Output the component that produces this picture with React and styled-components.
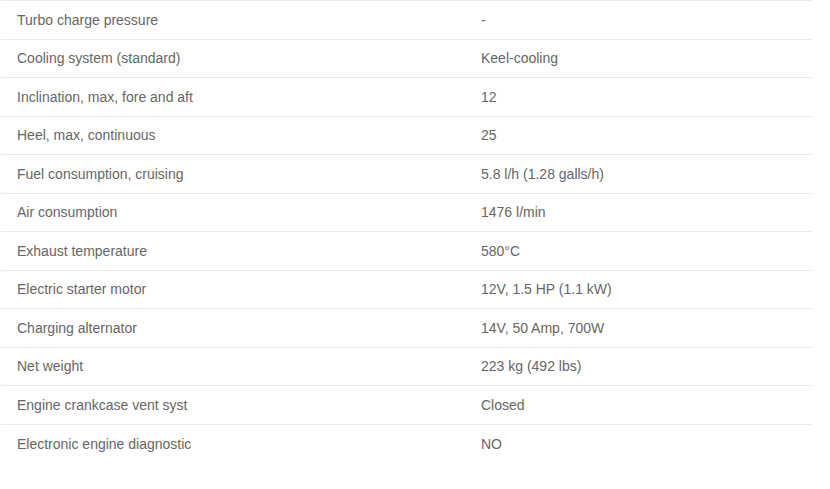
import styled, { createGlobalStyle } from 'styled-components';

const GlobalStyle = createGlobalStyle`
  body {
    margin: 0;
    background: #fff;
    font-family: 'Liberation Sans', Arial, sans-serif;
  }
`;

const Wrapper = styled.div`
  padding: 0 0 0 1px;
  width: 812px;
`;

const Table = styled.table`
  width: 100%;
  border-collapse: collapse;
  font-size: 14px;
  color: #666;
`;

const Row = styled.tr`
  height: 38.5px;
  border-top: 1px solid #ebebeb;
`;

const Cell = styled.td`
  padding: 0 0 0 ${(p) => (p.$value ? '0' : '16px')};
  width: ${(p) => (p.$value ? 'auto' : '464px')};
  vertical-align: middle;
  line-height: 16px;
`;

const specs = [
  ['Turbo charge pressure', '-'],
  ['Cooling system (standard)', 'Keel-cooling'],
  ['Inclination, max, fore and aft', '12'],
  ['Heel, max, continuous', '25'],
  ['Fuel consumption, cruising', '5.8 l/h (1.28 galls/h)'],
  ['Air consumption', '1476 l/min'],
  ['Exhaust temperature', '580°C'],
  ['Electric starter motor', '12V, 1.5 HP (1.1 kW)'],
  ['Charging alternator', '14V, 50 Amp, 700W'],
  ['Net weight', '223 kg (492 lbs)'],
  ['Engine crankcase vent syst', 'Closed'],
  ['Electronic engine diagnostic', 'NO'],
];

const App = () => {
  return (
    <Wrapper>
      <GlobalStyle />
      <Table>
        <tbody>
          {specs.map(([label, value]) => (
            <Row key={label}>
              <Cell>{label}</Cell>
              <Cell $value>{value}</Cell>
            </Row>
          ))}
        </tbody>
      </Table>
    </Wrapper>
  );
};

export default App;
